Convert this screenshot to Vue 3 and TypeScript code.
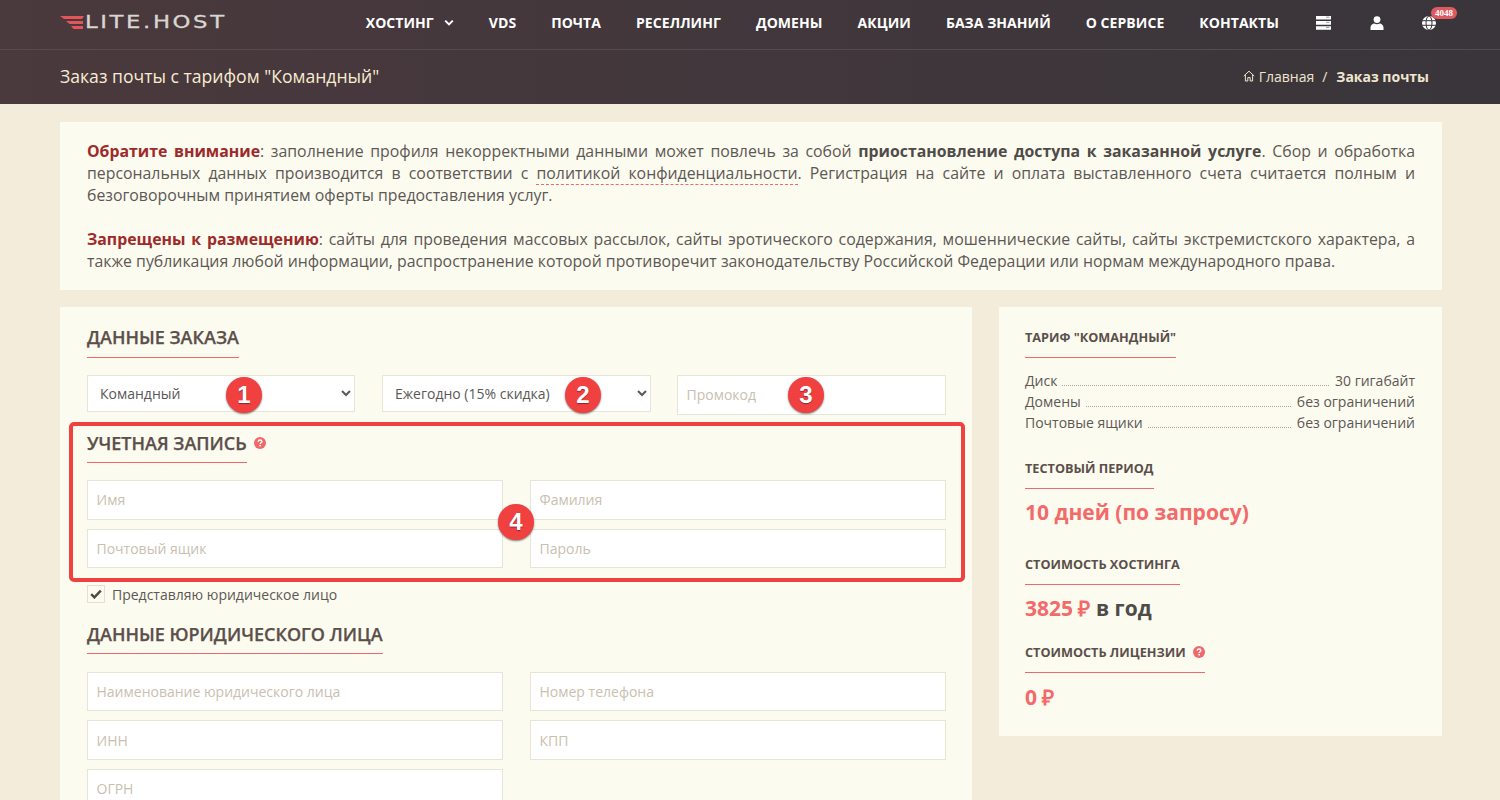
<script setup lang="ts">
const nav: string[] = ['VDS', 'Почта', 'Реселлинг', 'Домены', 'Акции', 'База знаний', 'О сервисе', 'Контакты']
const specs = [
  { k: 'Диск', v: '30 гигабайт' },
  { k: 'Домены', v: 'без ограничений' },
  { k: 'Почтовые ящики', v: 'без ограничений' },
]
</script>

<template>
  <div class="page">
    <header class="head">
      <div class="top">
        <div class="logo">
          <svg class="logo-mark" width="24" height="13" viewBox="0 0 24 13">
            <path d="M0 0H24L22 3H4Z M6 5H23V8H9.5Z M11 10H23V13H13.5Z" fill="#e4555a" />
          </svg>
          <span class="logo-text">LITE.HOST</span>
        </div>
        <nav class="nav">
          <a class="nav-item">Хостинг
            <svg class="caret" width="10" height="8" viewBox="0 0 10 8"><path d="M1.2 1.6 5 5.4 8.8 1.6" fill="none" stroke="#fff" stroke-width="2" /></svg>
          </a>
          <a v-for="n in nav" :key="n" class="nav-item">{{ n }}</a>
          <svg class="ico first" width="15" height="14" viewBox="0 0 15 14">
            <path d="M0 0h15v3.6H0zM0 5.1h15v3.6H0zM0 10.2h15v3.6H0z" fill="#fff" />
            <path d="M10 1.2h3.5M10 6.3h3.5M10 11.4h3.5" stroke="#9a9a9a" stroke-width="1" />
          </svg>
          <svg class="ico" width="14" height="14" viewBox="0 0 14 14">
            <circle cx="7" cy="3.6" r="3.4" fill="#fff" />
            <path d="M0.5 14v-2.6C0.5 9 2.5 7.6 4.4 7.4 5.8 8.4 8.2 8.4 9.6 7.4 11.5 7.6 13.5 9 13.5 11.4V14Z" fill="#fff" />
          </svg>
          <span class="globe-wrap">
            <svg class="ico-g" width="14" height="14" viewBox="0 0 14 14">
              <circle cx="7" cy="7" r="7" fill="#fff" />
              <path d="M0 4.7h14M0 9.3h14" stroke="#3a353a" stroke-width="1" />
              <ellipse cx="7" cy="7" rx="3" ry="7" fill="none" stroke="#3a353a" stroke-width="1" />
            </svg>
            <span class="badge">4048</span>
          </span>
        </nav>
      </div>
      <div class="sub">
        <h1 class="title">Заказ почты с тарифом "Командный"</h1>
        <div class="crumbs">
          <svg width="12" height="12" viewBox="0 0 12 12">
            <path d="M.8 6 6 1.2 11.2 6M2.4 5v6h2.4V7.6h2.4V11h2.4V5" fill="none" stroke="#f0e6cf" stroke-width="1" />
          </svg>
          <span class="crumb-link">Главная</span>
          <span class="crumb-sep">/</span>
          <b class="crumb-cur">Заказ почты</b>
        </div>
      </div>
    </header>

    <main class="main">
      <section class="notice">
        <p><b class="warn">Обратите внимание</b>: заполнение профиля некорректными данными может повлечь за собой <b>приостановление доступа к заказанной услуге</b>. Сбор и обработка персональных данных производится в соответствии с <a class="link">политикой конфиденциальности</a>. Регистрация на сайте и оплата выставленного счета считается полным и безоговорочным принятием оферты предоставления услуг.</p>
        <p class="second"><b class="warn">Запрещены к размещению</b>: сайты для проведения массовых рассылок, сайты эротического содержания, мошеннические сайты, сайты экстремистского характера, а также публикация любой информации, распространение которой противоречит законодательству Российской Федерации или нормам международного права.</p>
      </section>

      <div class="columns">
        <form class="card form" @submit.prevent>
          <h2 class="h2">Данные заказа</h2>
          <div class="row3">
            <select class="sel"><option>Командный</option></select>
            <select class="sel"><option>Ежегодно (15% скидка)</option></select>
            <input class="inp promo" placeholder="Промокод" />
          </div>

          <div class="account-head">
            <h2 class="h2 account">Учетная запись</h2>
            <svg class="q" width="12" height="12" viewBox="0 0 12 12">
              <circle cx="6" cy="6" r="6" fill="#f1686a" />
              <path d="M4.2 4.7C4.2 3.6 5 3 6 3S7.9 3.6 7.9 4.5C7.9 5.7 6.1 5.8 6.1 7" fill="none" stroke="#fff" stroke-width="1.4" />
              <rect x="5.3" y="7.9" width="1.6" height="1.5" fill="#fff" />
            </svg>
          </div>
          <div class="grid2 account-grid">
            <input class="inp" placeholder="Имя" />
            <input class="inp" placeholder="Фамилия" />
            <input class="inp" placeholder="Почтовый ящик" />
            <input class="inp" placeholder="Пароль" />
          </div>

          <label class="check">
            <span class="box">
              <svg width="12" height="10" viewBox="0 0 12 10"><path d="M1.2 5.2 4.4 8.4 10.8 1.6" fill="none" stroke="#4d4a48" stroke-width="2.4" /></svg>
            </span>
            Представляю юридическое лицо
          </label>

          <h2 class="h2 legal">Данные юридического лица</h2>
          <div class="grid2 legal-grid">
            <input class="inp" placeholder="Наименование юридического лица" />
            <input class="inp" placeholder="Номер телефона" />
            <input class="inp" placeholder="ИНН" />
            <input class="inp" placeholder="КПП" />
            <input class="inp" placeholder="ОГРН" />
          </div>
        </form>

        <aside class="card side">
          <h3 class="h3">Тариф "Командный"</h3>
          <ul class="specs">
            <li v-for="s in specs" :key="s.k" class="spec">
              <span>{{ s.k }}</span><i class="dots"></i><span>{{ s.v }}</span>
            </li>
          </ul>
          <h3 class="h3 trial">Тестовый период</h3>
          <div class="big first-big">10 дней (по запросу)</div>
          <h3 class="h3 cost">Стоимость хостинга</h3>
          <div class="big price"><span class="red">3825 ₽</span> в год</div>
          <h3 class="h3 lic">Стоимость лицензии
            <svg class="q2" width="12" height="12" viewBox="0 0 12 12">
              <circle cx="6" cy="6" r="6" fill="#f1686a" />
              <path d="M4.2 4.7C4.2 3.6 5 3 6 3S7.9 3.6 7.9 4.5C7.9 5.7 6.1 5.8 6.1 7" fill="none" stroke="#fff" stroke-width="1.4" />
              <rect x="5.3" y="7.9" width="1.6" height="1.5" fill="#fff" />
            </svg>
          </h3>
          <div class="big zero">0 ₽</div>
        </aside>
      </div>
    </main>

    <div class="frame"></div>
    <span class="pin p1">1</span>
    <span class="pin p2">2</span>
    <span class="pin p3">3</span>
    <span class="pin p4">4</span>
  </div>
</template>

<style>
html, body { margin: 0; height: 800px; overflow: hidden; background: #f3ecda; }
</style>

<style scoped>
.page { position: relative; height: 800px; overflow: hidden; background: #f3ecda; font-family: "Open Sans", sans-serif; font-size: 14px; color: #5c5855; }
.head { background: linear-gradient(90deg, #4a393d, #39353a); height: 104px; }
.top { display: flex; align-items: center; padding: 0 64px 4px 60px; box-sizing: border-box; height: 50px; border-bottom: 1px solid #554a4d; }
.logo { display: flex; align-items: center; margin-top: -1px; }
.logo-mark { display: block; flex: none; margin-right: 1px; }
.logo-text { font-family: "DejaVu Sans", sans-serif; font-size: 17.5px; line-height: 16px; letter-spacing: 2px; color: #d9d5cf; display: inline-block; transform: scaleX(1.3); transform-origin: left; -webkit-text-stroke: .3px #d9d5cf; }
.nav { margin-left: auto; display: flex; align-items: center; gap: 35px; }
.nav-item { color: #fff; font-weight: 700; font-size: 14px; letter-spacing: .06px; text-transform: uppercase; white-space: nowrap; display: flex; align-items: center; gap: 10px; line-height: 20px; }
.caret { display: block; }
.ico { display: block; margin-right: 4px; }
.first { margin-left: 2px; }
.globe-wrap { position: relative; display: block; width: 14px; height: 14px; margin-left: -1px; }
.ico-g { display: block; }
.badge { position: absolute; left: 9px; top: -9px; background: #dd5a60; color: #fff; font-size: 9px; line-height: 12px; height: 12px; padding: 0 4px; border-radius: 7px; font-weight: 600; font-family: "Liberation Serif", serif; }
.sub { height: 54px; display: flex; align-items: center; justify-content: space-between; padding: 0 71px 2px 60px; box-sizing: border-box; }
.title { margin: 0; font-size: 17.6px; font-weight: 400; color: #f8ecd2; }
.crumbs { display: flex; align-items: center; color: #f0e6cf; font-size: 14px; }
.crumb-link { margin-left: 4px; }
.crumb-sep { margin: 0 9px 0 8px; }
.crumb-cur { font-weight: 700; }
.main { padding: 18px 58px 0 60px; }
.notice { background: #fcfbef; padding: 18px 27px; font-size: 15.85px; line-height: 22px; text-align: justify; color: #5c5855; }
.notice p { margin: 0; }
.notice b { color: #4f4b48; font-weight: 700; }
.notice .second { margin-top: 22px; }
.notice b.warn { color: #9d2a2a; }
.link { border-bottom: 1px dashed #f1686a; }
.columns { display: flex; justify-content: space-between; margin-top: 17px; align-items: flex-start; }
.card { background: #fcfbef; }
.form { width: 912px; padding: 16px 26px 0 27px; box-sizing: border-box; height: 560px; }
.side { width: 443px; height: 429px; padding: 20px 27px 0 26px; box-sizing: border-box; }
.h2 { display: table; margin: 0; font-size: 18px; line-height: 28px; font-weight: 600; text-transform: uppercase; color: #5b4f4b; padding-bottom: 6px; border-bottom: 1px solid #f1686a; white-space: nowrap; -webkit-text-stroke: .25px #5b4f4b; }
.row3 { display: flex; margin-top: 17px; align-items: flex-start; }
.sel { height: 37px; width: 269px; flex: none; box-sizing: border-box; border: 1px solid #e8e5d8; background-color: #fff; font: 14px "Open Sans", sans-serif; color: #5c5855; padding: 0 8px; border-radius: 0; outline: none; }
.sel:first-child { width: 268px; }
.sel + .sel { margin-left: 27px; }
.inp { height: 39.6px; box-sizing: border-box; border: 1px solid #e8e5d8; background: #fff; font: 14px "Open Sans", sans-serif; color: #5c5855; padding: 0 8.5px; outline: none; width: 100%; display: block; }
.inp.promo { width: 269px; flex: none; margin-left: 26px; }
.inp::placeholder { color: #c9c0b0; opacity: 1; }
.account-head { display: flex; align-items: flex-start; margin-top: 14.4px; }
.account { padding-bottom: 5px; }
.q { margin: 8px 0 0 7px; flex: none; }
.grid2 { display: grid; grid-template-columns: 1fr 1fr; column-gap: 27px; row-gap: 9px; }
.account-grid { margin-top: 17px; }
.check { display: flex; align-items: center; margin-top: 17px; height: 18px; font-size: 14px; color: #5c5855; }
.box { width: 18px; height: 18px; box-sizing: border-box; border: 1px solid #e4e0d0; display: flex; align-items: center; justify-content: center; margin-right: 7px; }
.legal { margin-top: 17px; padding-bottom: 5px; }
.legal-grid { margin-top: 17.6px; }
.h3 { display: table; margin: 0; font-size: 12.7px; line-height: 20px; font-weight: 700; text-transform: uppercase; color: #5b4f4b; padding-bottom: 10px; border-bottom: 1px solid #f1686a; white-space: nowrap; }
.specs { list-style: none; margin: 12px 0 0; padding: 0; }
.spec { display: flex; font-size: 14px; line-height: 21px; color: #5c5855; }
.dots { flex: 1; border-bottom: 1px dotted #a9a496; margin: 0 6px 5px 5px; }
.trial { margin-top: 25px; }
.big { font-size: 21px; font-weight: 700; color: #f36a6a; line-height: 28px; }
.first-big { margin-top: 9px; }
.cost { margin-top: 28px; }
.price { color: #4f4b48; margin-top: 9px; font-size: 21px; }
.red { color: #f36a6a; }
.lic { margin-top: 20px; }
.q2 { margin-left: 4px; vertical-align: -1px; }
.zero { margin-top: 10px; }
.frame { position: absolute; left: 69px; top: 422px; width: 896px; height: 160px; box-sizing: border-box; border: 4px solid #f04040; border-radius: 5px; pointer-events: none; }
.pin { position: absolute; width: 36px; height: 36px; border-radius: 50%; background: #f04040; color: #fff; font: 700 24px/36px "Liberation Sans", sans-serif; text-align: center; box-shadow: 0 1px 2px rgba(0, 0, 0, .5); text-shadow: 0 1px 1px rgba(0, 0, 0, .4); }
.p1 { left: 226px; top: 377px; }
.p2 { left: 565px; top: 377px; }
.p3 { left: 788px; top: 377px; }
.p4 { left: 498px; top: 504px; }
</style>
